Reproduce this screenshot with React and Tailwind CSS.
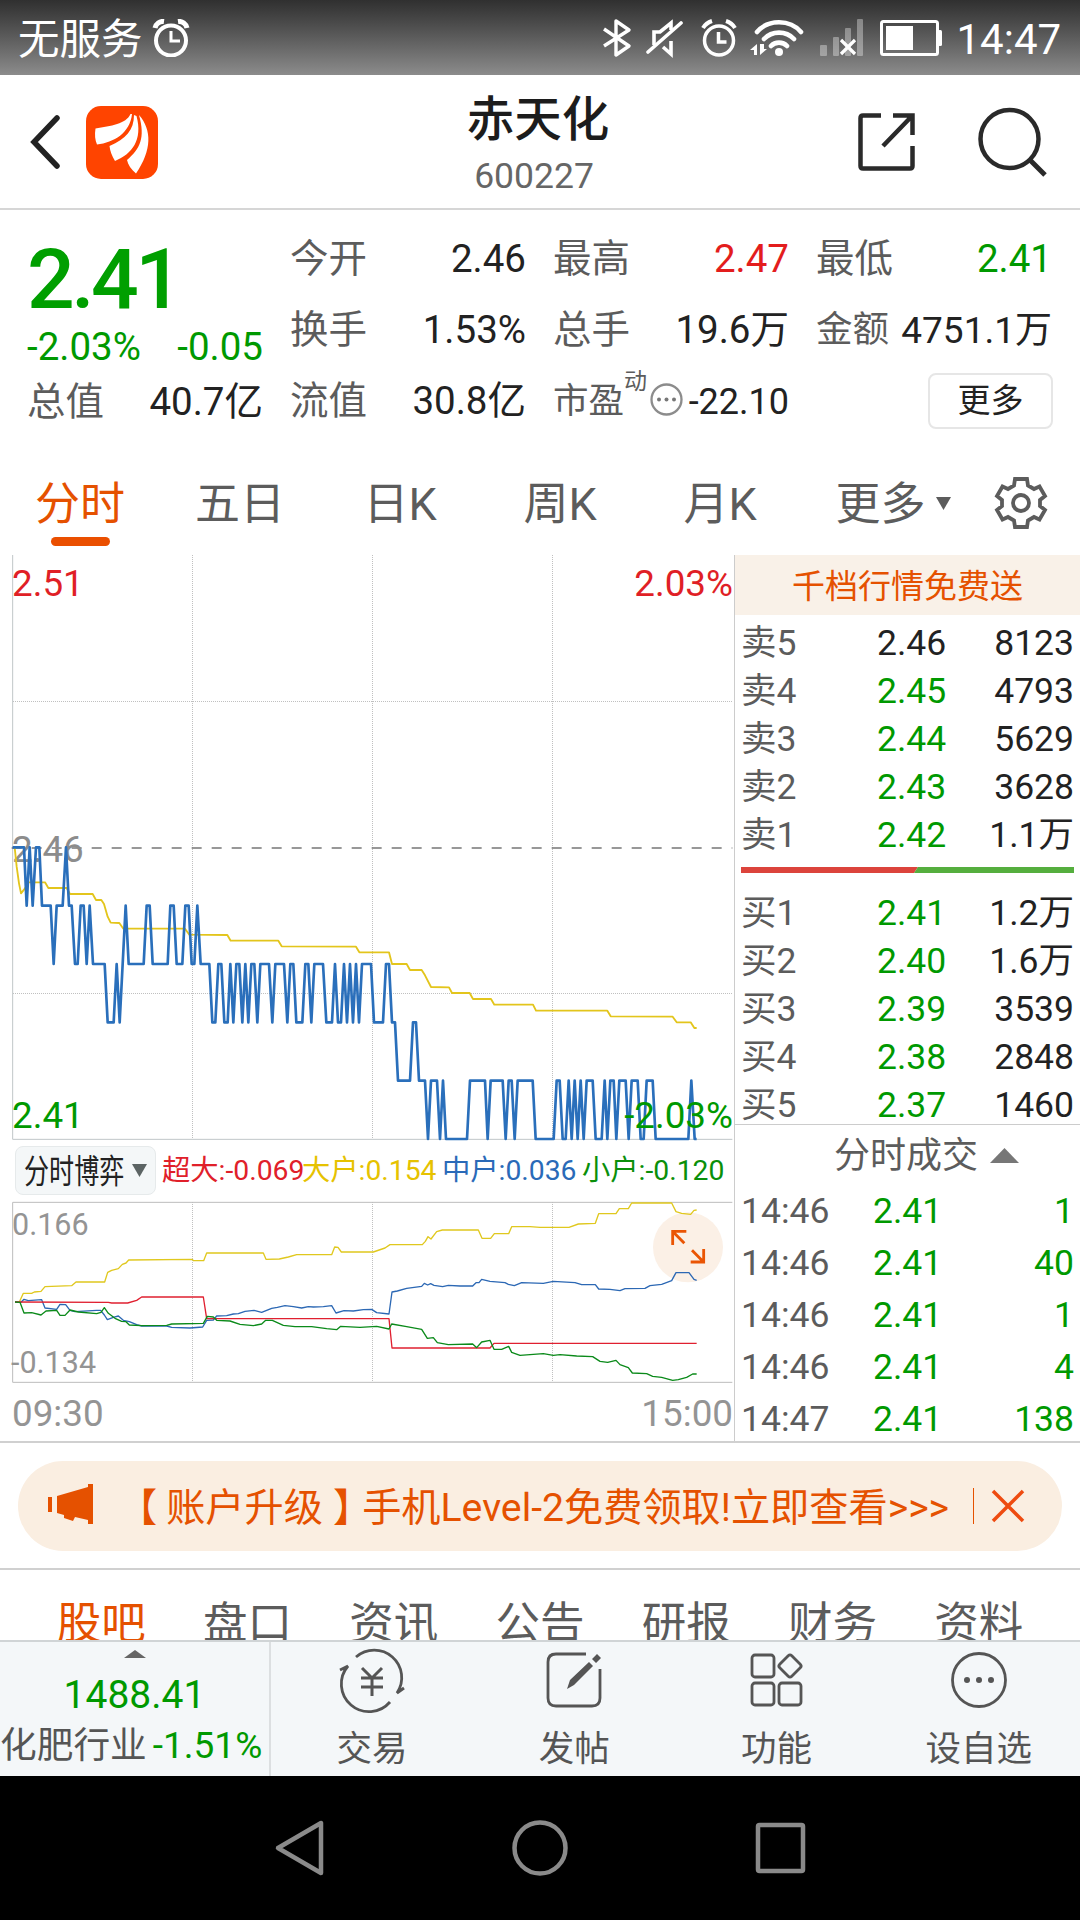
import { Fragment } from "react";

const statColumns = [
  [
    { label: "今开", value: "2.46" },
    { label: "换手", value: "1.53%" },
    { label: "流值", value: "30.8亿" },
  ],
  [
    { label: "最高", value: "2.47", color: "text-[#e31d1d]" },
    { label: "总手", value: "19.6万" },
  ],
  [
    { label: "最低", value: "2.41", color: "text-[#009900]" },
    { label: "金额", value: "4751.1万", color: "text-[37px]", tight: true },
  ],
];

const chartTabs = ["分时", "五日", "日K", "周K", "月K", "更多"];

const sellOrders = [
  { name: "卖5", price: "2.46", amount: "8123", flat: true },
  { name: "卖4", price: "2.45", amount: "4793" },
  { name: "卖3", price: "2.44", amount: "5629" },
  { name: "卖2", price: "2.43", amount: "3628" },
  { name: "卖1", price: "2.42", amount: "1.1万" },
];

const buyOrders = [
  { name: "买1", price: "2.41", amount: "1.2万" },
  { name: "买2", price: "2.40", amount: "1.6万" },
  { name: "买3", price: "2.39", amount: "3539" },
  { name: "买4", price: "2.38", amount: "2848" },
  { name: "买5", price: "2.37", amount: "1460" },
];

const trades = [
  { time: "14:46", price: "2.41", amount: "1" },
  { time: "14:46", price: "2.41", amount: "40" },
  { time: "14:46", price: "2.41", amount: "1" },
  { time: "14:46", price: "2.41", amount: "4" },
  { time: "14:47", price: "2.41", amount: "138" },
];

const flows = [
  { text: "超大:-0.069", color: "text-[#e0202a]" },
  { text: "大户:0.154", color: "text-[#e6c200]" },
  { text: "中户:0.036", color: "text-[#2a6ab8]" },
  { text: "小户:-0.120", color: "text-[#0a8f0a]" },
];

const infoTabs = ["股吧", "盘口", "资讯", "公告", "研报", "财务", "资料"];

// x position and how many cents the price is below 2.46
const priceSteps = [
  [38, 0], [72, 0], [80, 1], [89, 0], [98, 1], [108, 0], [118, 0], [126, 1], [152, 1], [161, 2],
  [170, 1], [188, 1], [198, 0], [207, 1], [215, 1], [225, 2], [233, 2], [242, 1], [251, 1], [260, 2],
  [269, 1], [279, 2], [314, 2], [323, 3], [341, 3], [350, 2], [359, 3], [377, 1], [386, 2], [431, 2],
  [440, 1], [449, 1], [458, 2], [503, 2], [511, 1], [521, 1], [530, 2], [547, 2], [556, 1], [566, 1],
  [575, 2], [583, 2], [592, 1], [602, 2], [628, 2], [637, 3], [646, 3], [655, 2], [664, 2], [673, 3],
  [683, 3], [691, 2], [700, 3], [709, 2], [718, 2], [727, 3], [736, 2], [745, 3], [754, 2], [763, 2],
  [772, 3], [781, 2], [807, 2], [817, 3], [826, 2], [852, 2], [862, 3], [871, 2], [880, 2], [889, 3],
  [907, 3], [916, 2], [925, 2], [934, 3], [943, 2], [969, 2], [979, 3], [996, 3], [1005, 2], [1014, 3],
  [1023, 3], [1032, 2], [1041, 3], [1050, 2], [1059, 3], [1068, 2], [1077, 3], [1086, 2], [1113, 2],
  [1122, 3], [1149, 3], [1158, 2], [1167, 2], [1176, 3], [1185, 3], [1194, 4], [1230, 4], [1239, 3],
  [1248, 3], [1257, 4], [1275, 4], [1284, 5], [1293, 4], [1311, 4], [1320, 5], [1329, 4], [1338, 5],
  [1401, 5], [1410, 4], [1455, 4], [1463, 5], [1472, 4], [1508, 4], [1517, 5], [1526, 4], [1535, 4],
  [1544, 5], [1553, 4], [1598, 4], [1607, 5], [1661, 5], [1670, 4], [1679, 4], [1688, 5], [1697, 5],
  [1706, 4], [1715, 5], [1724, 4], [1733, 5], [1742, 4], [1751, 5], [1760, 4], [1778, 4], [1787, 5],
  [1805, 5], [1814, 4], [1822, 5], [1831, 4], [1841, 4], [1849, 5], [1858, 4], [1877, 4], [1886, 5],
  [1895, 4], [1913, 4], [1922, 5], [1931, 5], [1940, 4], [1958, 4], [1967, 5], [2065, 5], [2074, 4],
  [2084, 5], [2090, 5],
];
const priceLine = priceSteps.map(([x, s]) => `${x},${82 + s * 175}`).join(" ");

const averageLine =
  "44,82 50,140 57,190 63,220 75,205 85,187 135,187 145,204 200,204 210,222 278,222 288,240 304,240 312,252 323,290 332,308 358,309 370,326 555,326 568,344 682,345 692,362 835,362 845,379 1068,380 1078,397 1167,397 1176,432 1220,432 1230,450 1265,450 1275,466 1293,501 1347,502 1356,519 1409,519 1419,537 1473,537 1483,554 1599,554 1608,572 1822,572 1832,589 2018,590 2030,607 2072,607 2083,624 2090,624";

const flowLines = [
  {
    color: "#e0c81e",
    points:
      "45,486 58,486 70,460 95,460 103,456 123,454 135,440 215,437 228,426 314,426 323,397 335,391 355,386 367,373 378,369 386,360 577,358 580,362 611,362 620,339 790,339 798,358 838,357 865,351 890,344 995,344 1004,321 1014,322 1024,336 1120,336 1155,324 1170,314 1267,314 1276,304 1284,290 1293,297 1310,275 1327,270 1435,270 1446,295 1472,295 1483,281 1526,281 1535,260 1590,260 1620,262 1707,262 1735,252 1786,250 1796,221 1848,221 1858,206 1885,206 1895,189 2015,189 2028,215 2045,220 2072,223 2082,211 2090,210",
  },
  {
    color: "#2c68b4",
    points:
      "45,486 63,487 72,478 85,482 125,479 135,504 170,508 180,493 197,494 210,511 225,515 290,511 302,511 313,525 322,539 340,532 355,528 370,541 388,545 410,554 425,558 500,558 515,562 570,564 608,561 620,541 640,540 650,528 680,527 700,522 715,521 735,514 762,511 785,517 800,511 815,505 832,502 855,497 880,500 905,504 925,500 940,501 970,500 995,497 1008,519 1032,512 1060,513 1090,509 1115,508 1130,518 1167,522 1176,456 1192,453 1220,445 1265,439 1273,430 1283,435 1292,431 1302,436 1328,440 1345,436 1380,438 1418,438 1428,428 1437,428 1445,418 1470,424 1515,428 1525,433 1543,437 1565,428 1630,430 1660,424 1725,428 1745,434 1786,434 1796,447 1830,448 1860,452 1875,446 1935,445 1950,437 1985,433 2015,422 2028,398 2067,398 2082,418 2090,421",
  },
  {
    color: "#e02030",
    points:
      "45,486 325,487 335,489 383,489 410,481 425,471 610,471 620,536 1167,536 1176,624 1470,624 1482,610 2090,610",
  },
  {
    color: "#0b8a1a",
    points:
      "45,486 60,487 72,519 95,518 123,525 138,513 170,511 180,526 195,526 210,510 235,516 290,521 303,517 313,503 325,520 345,535 365,544 378,545 388,555 425,557 500,556 515,552 610,550 622,529 640,531 650,541 690,543 720,553 760,557 785,552 797,541 817,541 850,556 885,560 935,560 980,566 1010,569 1022,559 1080,562 1130,559 1167,567 1175,552 1220,560 1265,568 1282,595 1300,593 1312,608 1345,614 1418,612 1430,623 1445,606 1470,601 1482,628 1505,628 1526,619 1535,637 1560,646 1630,641 1660,646 1680,644 1730,648 1778,650 1800,664 1823,667 1848,661 1860,674 1885,683 1897,699 1940,701 1958,709 1985,712 2018,721 2035,719 2060,712 2078,702 2090,702",
  },
];

const StatusBar = () => (
  <div className="flex h-[75px] items-center bg-linear-to-b from-[#303030] to-[#8c8c8c] text-white">
    <span className="mt-1 ml-[18px] text-[41.5px] leading-none">无服务</span>
    <svg className="ml-[9px]" width="38" height="38" viewBox="0 0 38 38" fill="none" stroke="#fff">
      <circle cx="19" cy="21.5" r="15" strokeWidth="4" />
      <path d="M3 9 A8 8 0 0 1 12 2.5 M26 2.5 A8 8 0 0 1 35 9" strokeWidth="5" />
      <path d="M19 12v10h9" strokeWidth="3" />
    </svg>
    <svg className="ml-[412px]" width="30" height="40" viewBox="0 0 30 40" fill="none" stroke="#fff" strokeWidth="3.4">
      <path d="M2 11l25 17-13 9V3l13 9L2 28" strokeLinejoin="round" />
    </svg>
    <svg className="ml-3.5" width="38" height="40" viewBox="0 0 38 40" fill="none" stroke="#fff" strokeWidth="3.6">
      <path d="M8 27V14h6l11-9v7M25 23v13l-8-7" />
      <path d="M2 34L35 5" strokeLinecap="round" />
    </svg>
    <svg className="ml-[16px]" width="38" height="38" viewBox="0 0 38 38" fill="none" stroke="#fff">
      <circle cx="19" cy="21.5" r="14.5" strokeWidth="3.5" />
      <path d="M3 9 Q6 4 12 2 M26 2 Q32 4 35 9" strokeWidth="4" />
      <path d="M18.5 13v10h8" strokeWidth="3.5" />
    </svg>
    <svg className="ml-3" width="55" height="38" viewBox="0 0 55 38" fill="none" stroke="#fff" strokeLinecap="round">
      <path d="M7 13C18 0 40 0 51 13M14 20c8-8.500 22-8.500 30 0M21 27c4-4.500 12-4.500 16 0" strokeWidth="4.600" />
      <circle cx="29" cy="33" r="4" fill="#fff" stroke="none" />
      <path d="M0 31l7-6v11H4v-5zM10 25v11l7-6h-3v-5z" fill="#fff" stroke="none" />
    </svg>
    <svg className="ml-[15px]" width="45" height="38" viewBox="0 0 45 38">
      <g fill="#fff" opacity="0.35">
        <rect x="0" y="26" width="7" height="11" rx="1" />
        <rect x="13" y="18" width="6" height="19" rx="1" />
        <rect x="25" y="9" width="6" height="28" rx="1" />
        <rect x="37" y="0" width="6" height="37" rx="1" />
      </g>
      <path d="M21 21l14 14M35 21L21 35" stroke="#fff" strokeWidth="3.200" />
    </svg>
    <svg className="ml-[15px]" width="62" height="38" viewBox="0 0 62 38">
      <rect x="1.500" y="2.500" width="56" height="33" rx="2" fill="none" stroke="#fff" strokeWidth="3" />
      <rect x="6" y="7" width="27" height="24" fill="#fff" />
      <rect x="58" y="11" width="4" height="16" rx="1.500" fill="#fff" />
    </svg>
    <span className="mt-1 ml-[15px] text-[42px] leading-none">14:47</span>
  </div>
);

const Header = () => (
  <header className="flex h-[135px] items-center border-b-2 border-[#d6d6d6]">
    <svg className="ml-7" width="34" height="56" viewBox="0 0 34 56" fill="none">
      <path d="M29 4L6 28l23 24" stroke="#222" strokeWidth="5.500" strokeLinecap="round" />
    </svg>
    <svg className="mt-0.5 ml-6" width="72" height="73" viewBox="0 0 72 73">
      <rect width="72" height="73" rx="15" fill="#ff4400" />
      <g fill="#fff">
        <path d="M44.500 8C40 18 25 20 9.500 22.500C8.500 29 9 34 11 38.500C28 36.500 44 27 46 8Z" />
        <path d="M48 9C48 24 40 33 23.500 40C24 45 26 50 29 55C46 48 57 34 50.500 10Z" />
        <path d="M53 9C66 24 66 44 50 67.500C45 63 42 59 41 54C54 43 59.500 32 53 9Z" />
      </g>
    </svg>
    <div className="ml-[266px] flex w-[220px] flex-col items-center pt-[15px]">
      <h1 className="h-[58px] pl-2 text-[47.500px] leading-[58px] font-medium text-[#1c1c1c]">赤天化</h1>
      <span className="h-[58px] text-[35.500px] leading-[54px] text-[#666]">600227</span>
    </div>
    <svg className="ml-[213px]" width="60" height="61" viewBox="0 0 60 61" fill="none" stroke="#2a2a2a" strokeWidth="4.500">
      <path d="M24 4.500H6q-2.500 0-2.500 2.500v48q0 2.500 2.500 2.500h47q2.500 0 2.500-2.500V35" />
      <path d="M36 4.500h19.500V24M55 5L26 35" />
    </svg>
    <svg className="ml-[59px]" width="72" height="70" viewBox="0 0 72 70" fill="none" stroke="#2a2a2a" strokeWidth="4.500">
      <circle cx="33.500" cy="32" r="29" />
      <path d="M54 53l15 15" strokeWidth="5" />
    </svg>
  </header>
);

const Quote = () => (
  <section className="flex h-[250px] gap-[27px] pt-[14px] pl-[27px] text-[38.5px] leading-none text-[#222]">
    <div className="w-[236px]">
      <div className="flex h-[111px] items-center text-[84px] font-medium tracking-[-3.500px] text-[#009f00]">2.41</div>
      <div className="flex h-6 items-center justify-between leading-6 text-[#009900]">
        <span>-2.03%</span>
        <span>-0.05</span>
      </div>
      <div className="flex h-[86px] items-center justify-between">
        <span className="text-[#5c5c5c]">总值</span>
        <span>40.7亿</span>
      </div>
    </div>
    {statColumns.map((rows, i) => (
      <div key={i} className="w-[236px]">
        {rows.map((row) => (
          <div key={row.label} className="flex h-[71px] items-center justify-between">
            <span className={row.tight ? "text-[36.5px] text-[#5c5c5c]" : "text-[#5c5c5c]"}>{row.label}</span>
            <span className={row.color}>{row.value}</span>
          </div>
        ))}
        {i === 1 && (
          <div className="flex h-[71px] items-center">
            <span className="text-[35.5px] text-[#5c5c5c]">市盈</span>
            <span className="mb-10 text-[23px] text-[#5c5c5c]">动</span>
            <svg className="mx-[3px] mb-1 shrink-0" width="33" height="33" viewBox="0 0 33 33">
              <circle cx="16.500" cy="16.500" r="15" fill="none" stroke="#8c8c8c" strokeWidth="2.300" />
              <g fill="#777">
                <circle cx="9" cy="16.500" r="2" />
                <circle cx="16.500" cy="16.500" r="2" />
                <circle cx="24" cy="16.500" r="2" />
              </g>
            </svg>
            <span className="ml-auto text-[36px]">-22.10</span>
          </div>
        )}
        {i === 2 && (
          <div className="flex h-[71px] items-center justify-end">
            <button className="-mr-px mb-0.5 h-14 w-[125px] rounded-lg border-2 border-[#e6e6e6] text-[33px] leading-none">
              更多
            </button>
          </div>
        )}
      </div>
    ))}
  </section>
);

const ChartTabs = () => (
  <nav className="flex h-[95px] text-[45px] leading-[44px] text-[#5c5c5c]">
    {chartTabs.map((tab, i) => (
      <div key={tab} className="flex w-[160px] flex-col items-center pt-[23px]">
        {i === 0 && (
          <Fragment>
            <span className="text-[#e55100]">{tab}</span>
            <span className="mt-[10px] h-[9px] w-[59px] rounded-full bg-[#ea4f00]" />
          </Fragment>
        )}
        {i > 0 && i < 5 && <span>{tab}</span>}
        {i === 5 && (
          <span className="flex items-center gap-2.5 pl-[26px]">
            {tab}
            <svg className="mb-1" width="15" height="13" viewBox="0 0 15 13">
              <path d="M0 0h15L7.500 13z" fill="#5c5c5c" />
            </svg>
          </span>
        )}
      </div>
    ))}
    <svg className="mt-4 ml-[34px]" width="54" height="54" viewBox="-27 -27 54 54" fill="none" stroke="#5c5c5c" strokeWidth="3.800">
      <path d="M-6 -24H6L7 -17.500L13 -14L18.500 -16.500L24 -7L19 -3V3L24 7L18.500 16.500L13 14L7 17.500L6 24H-6L-7 17.500L-13 14L-18.500 16.500L-24 7L-19 3V-3L-24 -7L-18.500 -16.500L-13 -14L-7 -17.500Z" />
      <circle r="8" />
    </svg>
  </nav>
);

const PriceChart = () => (
  <div className="relative h-[587px] text-[36.8px] leading-none">
    <svg width="735" height="587" viewBox="0 -795 2205 1761" fill="none">
      <g stroke="#c0c0c0" strokeWidth="3" strokeDasharray="3 3" shapeRendering="crispEdges">
        <path d="M577.500 -795V958M1117.500 -795V958M1657.500 -795V958M38 -355.500H2197M38 520.500H2197" />
      </g>
      <path d="M38 -795V958H2197" stroke="#c0c6c8" strokeWidth="3" />
      <path d="M35 84H2197" stroke="#777" strokeWidth="5" strokeDasharray="30 30" />
    </svg>
    <span className="absolute top-[277px] left-[12px] text-[#8c8c8c]">2.46</span>
    <svg className="absolute top-0 left-0" width="735" height="587" viewBox="0 -795 2205 1761" fill="none" strokeLinejoin="round">
      <polyline points={averageLine} stroke="#e3c51c" strokeWidth="5.500" />
      <polyline points={priceLine} stroke="#2a6fbb" strokeWidth="8" />
    </svg>
    <span className="absolute top-[11px] left-[12px] text-[#e01f26]">2.51</span>
    <span className="absolute top-[11px] right-px text-[#e01f26]">2.03%</span>
    <span className="absolute top-[543px] left-[12px] text-[#009900]">2.41</span>
    <span className="absolute top-[543px] right-px text-[#009900]">-2.03%</span>
  </div>
);

const FlowChart = () => (
  <div className="relative h-[183px] text-[30.5px] leading-none text-[#949494]">
    <svg width="735" height="183" viewBox="0 183 2205 549" fill="none" strokeLinejoin="round">
      <path
        d="M577.500 187V727M1117.500 187V727M1657.500 187V727"
        stroke="#c0c0c0"
        strokeWidth="3"
        strokeDasharray="3 3"
        shapeRendering="crispEdges"
      />
      <path d="M2197 187H38V727H2197" stroke="#bcbcbc" strokeWidth="3" />
      <circle cx="2064" cy="322" r="105" fill="#fbf0e6" />
      {flowLines.map((line) => (
        <polyline key={line.color} points={line.points} stroke={line.color} strokeWidth="4" />
      ))}
      <path
        d="M2059 274H2018V315M2019 275L2053 310M2072 366H2111V327M2110 365L2076 331"
        stroke="#ea5504"
        strokeWidth="8.500"
        strokeLinejoin="miter"
      />
    </svg>
    <span className="absolute top-[9px] left-[12px]">0.166</span>
    <span className="absolute top-[147px] left-[11px]">-0.134</span>
  </div>
);

const OrderRow = ({ order }) => (
  <div className="flex h-12 items-center">
    <span className="w-[136px] text-[#5c5c5c]">{order.name}</span>
    <span className={order.flat ? "text-[#222]" : "text-[#009900]"}>{order.price}</span>
    <span className="ml-auto text-[#222]">{order.amount}</span>
  </div>
);

const OrderBook = () => (
  <aside className="w-[346px] border-l border-[#ccc] text-[35.5px] leading-none">
    <div className="flex h-[60px] items-center justify-center bg-[#f9f1e8] pt-[3px] text-[33px] text-[#e55100]">
      千档行情免费送
    </div>
    <div className="h-[510px] border-b border-[#ccc] pt-[4.500px] pr-[6px] pl-[6px]">
      {sellOrders.map((order) => (
        <OrderRow key={order.name} order={order} />
      ))}
      <svg className="mt-[7px] mb-[17px]" width="333" height="6" viewBox="0 0 333 6">
        <path d="M0 0H177L173 6H0z" fill="#dc443c" />
        <path d="M177 0H333V6H173z" fill="#55ae3e" />
      </svg>
      {buyOrders.map((order) => (
        <OrderRow key={order.name} order={order} />
      ))}
    </div>
    <div className="flex h-[61px] items-center gap-3 pl-[99px] text-[36px] text-[#5c5c5c]">
      分时成交
      <svg width="29" height="15" viewBox="0 0 29 15">
        <path d="M14.500 0L29 15H0z" fill="#777" />
      </svg>
    </div>
    <div className="pr-[6px] pl-[6px]">
      {trades.map((trade, i) => (
        <div key={i} className="flex h-[52px] items-center text-[#009900]">
          <span className="w-[132px] text-[#5c5c5c]">{trade.time}</span>
          <span>{trade.price}</span>
          <span className="ml-auto">{trade.amount}</span>
        </div>
      ))}
    </div>
  </aside>
);

const Promo = () => (
  <div className="h-[127px] border-b-2 border-[#d0d0d0] px-[18px] pt-[18px]">
    <div className="flex h-[90px] items-center rounded-full bg-[#faeee1] text-[#e55100]">
      <svg className="ml-[30px] mb-1 shrink-0" width="46" height="41" viewBox="0 0 46 41" fill="#e55100">
        <path d="M0 13h4v15H0zM9 12L40 3V0h5v40h-5v-4l-13-3-2 4-9-3v-3l-7-2z" />
      </svg>
      <span className="ml-[24px] flex pt-1.5 text-[39.200px] leading-none whitespace-nowrap">
        <span className="mr-[9px]">【</span>
        <span>账户升级</span>
        <span className="mr-[-10px] ml-[10px]">】</span>
        <span>手机Level-2免费领取!立即查看&gt;&gt;&gt;</span>
      </span>
      <span className="mr-[17px] ml-auto h-[36px] w-[1.500px] bg-[#e55100]" />
      <svg className="mr-[37px] shrink-0" width="34" height="34" viewBox="0 0 34 34">
        <path d="M2 2l30 30M32 2L2 32" stroke="#ee4b10" strokeWidth="3.500" />
      </svg>
    </div>
  </div>
);

const InfoTabs = () => (
  <nav className="flex h-[70px] overflow-hidden px-[28px] pt-[32px] text-[44.500px] leading-[44px] text-[#5c5c5c]">
    {infoTabs.map((tab, i) => (
      <span key={tab} className={i === 0 ? "flex-1 text-center text-[#e55100]" : "flex-1 text-center"}>
        {tab}
      </span>
    ))}
  </nav>
);

const BarItem = ({ label, children }) => (
  <div className="flex flex-1 flex-col items-center pt-[8px]">
    <svg className="overflow-visible" width="66" height="60" viewBox="-33 -30 66 60" fill="none" stroke="#555" strokeWidth="2.800">
      {children}
    </svg>
    <span className="mt-[21px] text-[35.500px] leading-[36px] text-[#555]">{label}</span>
  </div>
);

const BottomBar = () => (
  <footer className="flex h-[136px] border-t-2 border-[#d0d4d6] bg-[#f4f7f9]">
    <div className="flex w-[271px] shrink-0 flex-col items-center border-r-2 border-[#dcdfe1] pt-2">
      <svg width="22" height="8" viewBox="0 0 22 8">
        <path d="M11 0L22 8H0z" fill="#666" />
      </svg>
      <span className="mt-[17px] text-[39px] leading-[40px] text-[#009900]">1488.41</span>
      <div className="mt-[12px] flex w-full items-center gap-[6px] text-[36.700px] leading-[38px] whitespace-nowrap text-[#555]">
        化肥行业
        <span className="text-[37px] text-[#009900]">-1.51%</span>
      </div>
    </div>
    <BarItem label="交易">
      <path d="M-16 -23A27.500 27.500 0 0 1 25 13l7 -5M18 22A27.500 27.500 0 0 1 -24 -14l-8 4" />
      <path d="M-10 -12L0 -2L10 -12M0 -2V16M-11 -2H11M-11 7H11" strokeWidth="3" />
    </BarItem>
    <BarItem label="发帖">
      <path d="M12 -26H-18q-8 0-8 8V18q0 8 8 8H18q8 0 8 -8V-11" />
      <path d="M-7 9L-4 0L15 -18L19 -14L0 5zM18 -21L23 -26L27 -22L22 -17z" fill="#555" stroke="none" />
    </BarItem>
    <BarItem label="功能">
      <rect x="-25" y="-25" width="22" height="22" rx="3" />
      <rect x="-25" y="3" width="22" height="22" rx="3" />
      <rect x="2" y="3" width="22" height="22" rx="3" />
      <rect x="4.500" y="-22.500" width="17" height="17" rx="2.500" transform="rotate(45 13 -14)" />
    </BarItem>
    <BarItem label="设自选">
      <circle r="26.500" />
      <g fill="#555" stroke="none">
        <circle cx="-12" r="3" />
        <circle r="3" />
        <circle cx="12" r="3" />
      </g>
    </BarItem>
  </footer>
);

const SystemNav = () => (
  <div className="flex h-[144px] items-center gap-[187px] bg-black pl-[273px]">
    <svg width="52" height="58" viewBox="0 0 52 58" fill="none" stroke="#8a8a8a" strokeWidth="4.500" strokeLinejoin="round">
      <path d="M48 4V54L5 29z" />
    </svg>
    <svg width="56" height="56" viewBox="0 0 56 56" fill="none" stroke="#8a8a8a" strokeWidth="4.500">
      <circle cx="28" cy="28" r="25.500" />
    </svg>
    <svg width="52" height="52" viewBox="0 0 52 52" fill="none" stroke="#8a8a8a" strokeWidth="4.500">
      <rect x="3" y="3" width="45" height="46" rx="1.500" />
    </svg>
  </div>
);

const App = () => {
  return (
    <div className="h-[1920px] w-[1080px] overflow-hidden bg-white font-[Roboto,'Noto_Sans_CJK_SC',sans-serif]">
      <StatusBar />
      <Header />
      <Quote />
      <ChartTabs />
      <div className="flex h-[888px] border-b-2 border-[#d0d0d0]">
        <div className="w-[734px]">
          <PriceChart />
          <div className="flex h-[59px] items-start pt-1 pl-[15px]">
            <div className="flex h-[49px] w-[141px] items-center rounded-lg border border-[#e6eaeb] bg-[#f4f7f8]">
              <span className="w-[102px] pt-0.5 pl-[8px] text-[33px] leading-none whitespace-nowrap text-[#222]">
                <span className="inline-block origin-left scale-x-[0.76]">分时博弈</span>
              </span>
              <svg className="ml-[14px]" width="15" height="13" viewBox="0 0 15 13">
                <path d="M0 0h15L7.500 13z" fill="#5c6464" />
              </svg>
            </div>
            <div className="ml-1.5 flex pt-[11px] text-[28.300px] leading-none whitespace-nowrap">
              {flows.map((flow) => (
                <span key={flow.text} className={`w-[140px] ${flow.color}`}>
                  {flow.text}
                </span>
              ))}
            </div>
          </div>
          <FlowChart />
          <div className="flex h-[58px] items-center justify-between pt-[3px] pr-px pl-[12px] text-[36.800px] leading-none text-[#949494]">
            <span>09:30</span>
            <span>15:00</span>
          </div>
        </div>
        <OrderBook />
      </div>
      <Promo />
      <InfoTabs />
      <BottomBar />
      <SystemNav />
    </div>
  );
};

export default App;
